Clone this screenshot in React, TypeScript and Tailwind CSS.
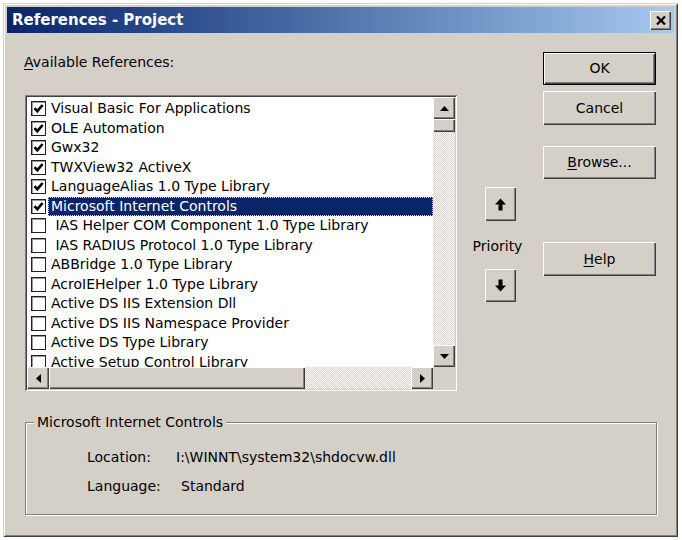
import React from "react";

const FONT = { fontFamily: '"DejaVu Sans", "Liberation Sans", sans-serif' };

const items: { t: string; c: boolean }[] = [
  { t: "Visual Basic For Applications", c: true },
  { t: "OLE Automation", c: true },
  { t: "Gwx32", c: true },
  { t: "TWXView32 ActiveX", c: true },
  { t: "LanguageAlias 1.0 Type Library", c: true },
  { t: "Microsoft Internet Controls", c: true },
  { t: " IAS Helper COM Component 1.0 Type Library", c: false },
  { t: " IAS RADIUS Protocol 1.0 Type Library", c: false },
  { t: "ABBridge 1.0 Type Library", c: false },
  { t: "AcroIEHelper 1.0 Type Library", c: false },
  { t: "Active DS IIS Extension Dll", c: false },
  { t: "Active DS IIS Namespace Provider", c: false },
  { t: "Active DS Type Library", c: false },
  { t: "Active Setup Control Library", c: false },
];

const raised =
  "bg-[#d4d0c8] shadow-[inset_1px_1px_0_#ffffff,inset_-1px_-1px_0_#404040,inset_-2px_-2px_0_#808080]";

function Tri({ dir }: { dir: "up" | "down" | "left" | "right" }) {
  const pts: Record<string, string> = {
    up: "4.5,1 9,6 0,6",
    down: "0,1 9,1 4.5,6",
    left: "6,0 6,9 1,4.5",
    right: "1,0 1,9 6,4.5",
  };
  const horiz = dir === "left" || dir === "right";
  return (
    <svg width={horiz ? 7 : 9} height={horiz ? 9 : 7} viewBox={horiz ? "0 0 7 9" : "0 0 9 7"}>
      <polygon points={pts[dir]} fill="#000" />
    </svg>
  );
}

function Check({ on }: { on: boolean }) {
  return (
    <div className="w-[15px] h-[15px] bg-white shrink-0 border border-[#202020] shadow-[inset_1px_1px_0_#9a9a9a] flex items-center justify-center">
      {on && (
        <svg width="11" height="11" viewBox="0 0 11 11">
          <polyline points="1.5,5.2 4.3,8.2 9.6,2" fill="none" stroke="#000" strokeWidth="2.6" />
        </svg>
      )}
    </div>
  );
}

const hatch =
  "bg-[image:repeating-conic-gradient(#d4d0c8_0%_25%,#ffffff_0%_50%)] bg-size-[2px_2px]";

function Btn({ children, def = false, h = 33 }: { children: React.ReactNode; def?: boolean; h?: number }) {
  return (
    <div
      className={`w-[113px] ${h === 34 ? "h-[34px]" : "h-[33px]"} flex items-center justify-center text-[14px] text-black ${raised} ${
        def ? "border border-black" : ""
      }`}
    >
      {children}
    </div>
  );
}

function BigArrow({ up }: { up: boolean }) {
  return (
    <svg width="11" height="13" viewBox="0 0 11 13">
      {up ? (
        <polygon points="5.5,0.5 11,6.5 7.5,6.5 7.5,12.5 3.5,12.5 3.5,6.5 0,6.5" fill="#000" />
      ) : (
        <polygon points="5.5,12.5 11,6.5 7.5,6.5 7.5,0.5 3.5,0.5 3.5,6.5 0,6.5" fill="#000" />
      )}
    </svg>
  );
}

export default function App() {
  return (
    <div className="w-[682px] h-[540px] bg-white p-[3px]" style={FONT}>
      <div className="w-[675px] h-[534px] bg-[#d4d0c8] p-[4px] flex flex-col shadow-[inset_1px_1px_0_#d4d0c8,inset_-1px_-1px_0_#404040,inset_2px_2px_0_#ffffff,inset_-2px_-2px_0_#808080]">
        {/* title bar */}
        <div className="h-[26px] shrink-0 bg-linear-to-r from-[#0a246a] to-[#a6caf0] flex items-center justify-between pl-[5px] pr-[3px]">
          <span className="text-white font-bold text-[15px] leading-none">References - Project</span>
          <div className={`w-[21px] h-[19px] flex items-center justify-center ${raised}`}>
            <svg width="10" height="9" viewBox="0 0 10 9">
              <path d="M1 0.5 L9 8.5 M9 0.5 L1 8.5" stroke="#000" strokeWidth="2.2" />
            </svg>
          </div>
        </div>

        {/* body */}
        <div className="flex-1 flex flex-col pl-[17px] pr-[17px]">
          <div className="flex items-start">
            {/* left column */}
            <div className="flex flex-col">
              <div className="mt-[21px] h-[16px] leading-[16px] text-[14px] text-black">
                <span className="underline underline-offset-2">A</span>vailable References:
              </div>
              <div className="mt-[25px] ml-[1px] w-[432px] h-[296px] p-[2px] bg-white shadow-[inset_1px_1px_0_#808080,inset_-1px_-1px_0_#ffffff,inset_2px_2px_0_#404040,inset_-2px_-2px_0_#d4d0c8]">
                <div className="grid grid-cols-[406px_22px] grid-rows-[270px_22px] w-[428px] h-[292px]">
                  {/* items */}
                  <div className="overflow-hidden bg-white pt-[2px]">
                    {items.map((it, i) => (
                      <div key={i} className="h-[19.5px] flex items-center pl-[4px]">
                        <Check on={it.c} />
                        <div
                          className={`ml-[2px] h-[19px] flex items-center px-[2px] whitespace-pre text-[14px] ${
                            i === 5
                              ? "flex-1 bg-[#0a246a] text-white border border-dotted border-[#e8d590]"
                              : "text-black border border-transparent"
                          }`}
                        >
                          {it.t}
                        </div>
                      </div>
                    ))}
                  </div>
                  {/* vertical scrollbar */}
                  <div className="flex flex-col">
                    <div className={`h-[22px] flex items-center justify-center ${raised}`}>
                      <Tri dir="up" />
                    </div>
                    <div className={`h-[13px] ${raised}`} />
                    <div className={`flex-1 ${hatch}`} />
                    <div className={`h-[22px] flex items-center justify-center ${raised}`}>
                      <Tri dir="down" />
                    </div>
                  </div>
                  {/* horizontal scrollbar */}
                  <div className="flex">
                    <div className={`w-[22px] flex items-center justify-center ${raised}`}>
                      <Tri dir="left" />
                    </div>
                    <div className={`w-[256px] ${raised}`} />
                    <div className={`flex-1 ${hatch}`} />
                    <div className={`w-[22px] flex items-center justify-center ${raised}`}>
                      <Tri dir="right" />
                    </div>
                  </div>
                  <div className="bg-[#d4d0c8]" />
                </div>
              </div>
            </div>

            {/* priority column */}
            <div className="w-[86px] flex flex-col items-center pt-[154px] pl-[1px]">
              <div className={`w-[31px] h-[34px] flex items-center justify-center ${raised}`}>
                <BigArrow up />
              </div>
              <div className="mt-[17px] h-[16px] leading-[16px] text-[14px] text-black -ml-[6px]">Priority</div>
              <div className={`mt-[15px] w-[31px] h-[33px] flex items-center justify-center ${raised}`}>
                <BigArrow up={false} />
              </div>
            </div>

            {/* buttons column */}
            <div className="flex flex-col pt-[19px]">
              <Btn def>OK</Btn>
              <div className="mt-[6px]">
                <Btn h={34}>Cancel</Btn>
              </div>
              <div className="mt-[21px]">
                <Btn>
                  <span>
                    <span className="underline underline-offset-2">B</span>rowse...
                  </span>
                </Btn>
              </div>
              <div className="mt-[63px]">
                <Btn h={34}>
                  <span>
                    <span className="underline underline-offset-2">H</span>elp
                  </span>
                </Btn>
              </div>
            </div>
          </div>

          {/* group box */}
          <fieldset className="mt-[23px] ml-[1px] w-[632px] h-[101px] border border-[#808080] shadow-[1px_1px_0_#ffffff,inset_1px_1px_0_#ffffff] px-0 pb-0 pt-0 min-w-0">
            <legend className="ml-[8px] px-[3px] bg-[#d4d0c8] text-[14px] leading-[16px] text-black">
              Microsoft Internet Controls
            </legend>
            <div className="flex flex-col pl-[61px] pt-[19px] text-[14px] text-black">
              <div className="flex h-[16px] items-center">
                <span className="w-[89px]">Location:</span>
                <span>I:\WINNT\system32\shdocvw.dll</span>
              </div>
              <div className="flex h-[16px] items-center mt-[13px]">
                <span className="w-[94px]">Language:</span>
                <span>Standard</span>
              </div>
            </div>
          </fieldset>
        </div>
      </div>
    </div>
  );
}
